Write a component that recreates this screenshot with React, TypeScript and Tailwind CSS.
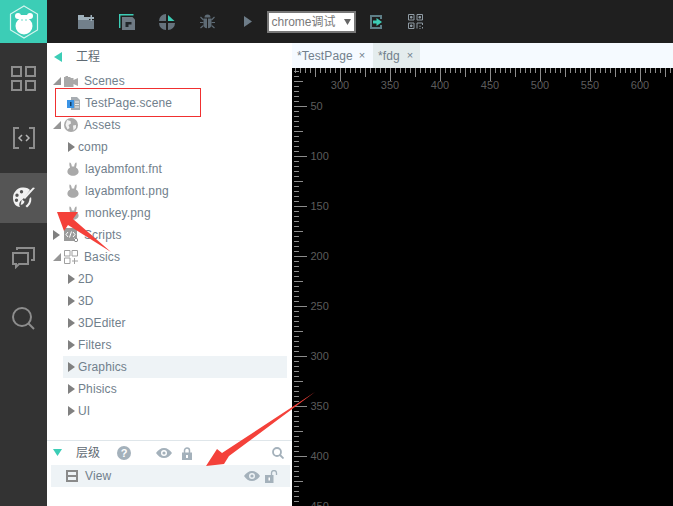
import type { ReactNode } from 'react'

const font = "font-['Liberation_Sans',Arial,'Noto_Sans_CJK_SC',sans-serif]"

const Corner = () => (
  <svg width="8" height="8" viewBox="0 0 8 8" className="shrink-0"><path d="M8 0V8H0Z" fill="#969696" /></svg>
)

const Arrow = () => (
  <svg width="7" height="10" viewBox="0 0 7 10" className="shrink-0"><path d="M0 0L7 5L0 10Z" fill="#808080" /></svg>
)

const Rabbit = () => (
  <svg width="12" height="14" viewBox="0 0 12 14" className="shrink-0">
    <path d="M2.5 0.5C4 0.5 4.6 2.5 4.8 4.5H7.2C7.4 2.5 8 0.5 9.5 0.5C9.8 2 9.6 4 8.9 5.4C10.6 6.3 11.6 7.8 11.6 9.6C11.6 12.2 9.2 13.8 6 13.8C2.8 13.8 0.4 12.2 0.4 9.6C0.4 7.8 1.4 6.3 3.1 5.4C2.4 4 2.2 2 2.5 0.5Z" fill="#a9a9a9" />
  </svg>
)

const Eye = ({ color = '#a4b1bb' }: { color?: string }) => (
  <svg width="16" height="10" viewBox="0 0 16 10" className="shrink-0">
    <path fillRule="evenodd" d="M0 5C2 2 4.800 0 8 0C11.200 0 14 2 16 5C14 8 11.200 10 8 10C4.800 10 2 8 0 5ZM8 2A3 3 0 1 0 8 8A3 3 0 1 0 8 2Z" fill={color} />
    <circle cx="8" cy="5" r="1.600" fill={color} />
  </svg>
)

const Row = ({ className = '', children }: { className?: string; children: ReactNode }) => (
  <div className={`flex h-[22px] items-center text-[12px] tracking-[0.12px] text-[#71808c] ${className}`}>{children}</div>
)

const Folder = ({ name, active }: { name: string; active?: boolean }) => (
  <Row className={`ml-[16px] mr-[5px] pl-[5px] ${active ? 'bg-[#eef3f6]' : ''}`}>
    <Arrow />
    <span className="ml-[3px]">{name}</span>
  </Row>
)

const FileRow = ({ name }: { name: string }) => (
  <Row className="pl-[20px]">
    <Rabbit />
    <span className="ml-[6px]">{name}</span>
  </Row>
)

const Group = ({ name, icon, closed }: { name: string; icon: ReactNode; closed?: boolean }) => (
  <Row className="pl-[6px]">
    {closed ? <Arrow /> : <Corner />}
    <span className={closed ? 'ml-[4px]' : 'ml-[3px]'}>{icon}</span>
    <span className="ml-[6px]">{name}</span>
  </Row>
)

const toolIcon = 'flex w-[40.500px] shrink-0 justify-center'

const Toolbar = () => (
  <div className="flex h-[43px] items-center bg-[#1f1f1f] pl-[19px]">
    <div className={toolIcon}>
      <svg width="16" height="14" viewBox="0 0 16 14">
        <path d="M0 0H6V2H11V5H16V14H0Z" fill="#72808b" />
        <path d="M0 0H6V2H11V5H0Z" fill="#9fb0ba" />
        <path d="M12.500 0V2H10.500V4H12.500V6H14V4H16V2H14V0Z" fill="#9fb0ba" />
      </svg>
    </div>
    <div className={toolIcon}>
      <svg width="16" height="16" viewBox="0 0 16 16">
        <path d="M0.700 14V0.700H14.500" fill="none" stroke="#3ccdb6" strokeWidth="1.400" />
        <path d="M3 3H13.500L16 5.500V16H3Z" fill="#6f7a84" />
        <path d="M6.500 8H12.500V10.500H9.500V13H6.500Z" fill="#22262a" />
      </svg>
    </div>
    <div className={toolIcon}>
      <svg width="16" height="16" viewBox="0 0 16 16">
        <path d="M7 0V7H0A7 7 0 0 1 7 0Z" fill="#66737d" />
        <path d="M9 1L15.500 7H9Z" fill="#3ccdb6" />
        <path d="M0 9H7V16A7 7 0 0 1 0 9Z" fill="#66737d" />
        <path d="M9 9H16A7 7 0 0 1 9 16Z" fill="#66737d" />
      </svg>
    </div>
    <div className={toolIcon}>
      <svg width="15" height="15" viewBox="0 0 15 15">
        <path d="M4.500 3.500A3 3 0 0 1 10.500 3.500Z" fill="#5e6b75" />
        <path d="M3.500 4.500H7V14.300A4 4 0 0 1 3.500 10.500ZM8 4.500H11.500V10.500A4 4 0 0 1 8 14.300Z" fill="#5e6b75" />
        <path d="M0.500 3L3.500 6M14.500 3L11.500 6M0 8.500H3.500M15 8.500H11.500M0.500 14L3.500 11.500M14.500 14L11.500 11.500" stroke="#5e6b75" strokeWidth="1.200" />
      </svg>
    </div>
    <div className={toolIcon}>
      <svg width="8" height="11" viewBox="0 0 8 11"><path d="M0 0L8 5.500L0 11Z" fill="#6d7c88" /></svg>
    </div>
    <div className={`ml-[-2px] flex h-[22px] w-[89px] shrink-0 items-center whitespace-nowrap border-2 border-[#777] bg-white pl-[3px] text-[12px] text-[#7a7a7a] ${font}`}>
      chrome调试
      <svg width="7" height="6" viewBox="0 0 7 6" className="ml-[8px] shrink-0"><path d="M0 0H7L3.500 6Z" fill="#666" /></svg>
    </div>
    <div className="ml-[10px] flex w-[20px] justify-center">
      <svg width="12" height="14" viewBox="0 0 12 14">
        <path d="M0 0H12V4H10V2H2V12H10V10H12V14H0Z" fill="#5f7f88" />
        <path d="M3 5.500H6.500V3L12 7L6.500 11V8.500H3Z" fill="#3ccdb6" />
      </svg>
    </div>
    <div className="ml-[20px] flex w-[20px] justify-center">
      <svg width="15" height="15" viewBox="0 0 15 15" fill="none" stroke="#8e9aa3" strokeWidth="1">
        <path d="M0.500 0.500H6V6H0.500ZM9 0.500H14.500V6H9ZM0.500 9H6V14.500H0.500Z" />
        <path d="M2.500 2.500H4V4H2.500ZM11 2.500H12.500V4H11ZM2.500 11H4V12.500H2.500Z" fill="#8e9aa3" />
        <path d="M9 14.500V9H14.500V11M12 11.500V13M14.500 13V14.500M11.500 14.500H12.500" />
      </svg>
    </div>
  </div>
)

const navItem = 'flex h-[50px] w-full items-center justify-center'

const Sidebar = () => (
  <div className="flex w-[47px] shrink-0 flex-col gap-[10px] bg-[#333] pt-[10px]">
    <div className={navItem}>
      <svg width="25" height="25" viewBox="0 0 25 25" fill="none" stroke="#8d8d8d" strokeWidth="2">
        <path d="M1 1H10V10H1ZM15 1H24V10H15ZM1 15H10V24H1ZM15 15H24V24H15Z" />
      </svg>
    </div>
    <div className={navItem}>
      <svg width="22" height="22" viewBox="0 0 22 22" fill="none" stroke="#8d8d8d" strokeWidth="2">
        <path d="M6 1H1V21H6M16 1H21V21H16" />
        <path d="M9 8L6 11L9 14M13 8L16 11L13 14" stroke="#b5b5b5" strokeWidth="1.500" />
      </svg>
    </div>
    <div className={`${navItem} bg-[#555]`}>
      <svg width="24" height="24" viewBox="0 0 24 24">
        <path fillRule="evenodd" d="M10 1.500C14 1 17 2.500 18 4L11 13L8.500 15C7 17 6.800 19 8 21C4 21 1 17 1 12C1 6.500 5 2 10 1.500ZM9.500 4A1.700 1.700 0 1 0 9.500 7.400A1.700 1.700 0 1 0 9.500 4ZM5 7.500A1.700 1.700 0 1 0 5 10.900A1.700 1.700 0 1 0 5 7.500ZM4.500 12.500A1.700 1.700 0 1 0 4.500 15.900A1.700 1.700 0 1 0 4.500 12.500Z" fill="#f2f2f2" />
        <path d="M23 2L13 13L11 11.500L21 1.500Z" fill="#f2f2f2" />
        <path d="M10 13.500L12.500 15.500C12 18 10 19 8.500 18.500C9.500 17 9 15 10 13.500Z" fill="#f2f2f2" />
        <path d="M19 11C20 15 18.500 19 15 21.500L13.500 20C16 18.500 17.500 15 17.500 12.500Z" fill="#f2f2f2" />
      </svg>
    </div>
    <div className={navItem}>
      <svg width="23" height="22" viewBox="0 0 23 22" fill="none" stroke="#8d8d8d" strokeWidth="2">
        <path d="M1 6H16V17H7L4 20V17H1Z" />
        <path d="M5 3V1H22V13H19" />
      </svg>
    </div>
    <div className={navItem}>
      <svg width="23" height="23" viewBox="0 0 23 23" fill="none" stroke="#8d8d8d" strokeWidth="2">
        <circle cx="10" cy="10" r="9" />
        <path d="M16.500 16.500L22 22" />
      </svg>
    </div>
  </div>
)

const ProjectTree = () => (
  <div className="flex-1">
    <div className="flex h-[27px] items-center pl-[7px]">
      <svg width="8" height="10" viewBox="0 0 8 10"><path d="M8 0V10L0 5Z" fill="#3ccdb6" /></svg>
      <span className="ml-[14px] text-[12px] text-[#5f6a73]">工程</span>
    </div>
    <Group name="Scenes" icon={
      <svg width="14" height="11" viewBox="0 0 14 11" className="block">
        <path d="M0 1H1.500V0H4V1H6.500V2H9.500V4L14 2V10L9.500 8V11H0Z" fill="#a9a9a9" />
      </svg>
    } />
    <Row className="pl-[20px]">
      <svg width="13" height="14" viewBox="0 0 13 14" className="shrink-0">
        <path d="M4 1H10L13 4V14H4Z" fill="#a8adb2" />
        <path d="M8 6H12M8 8.500H12M8 11H12" stroke="#f0f0f0" strokeWidth="1" />
        <path d="M0 4H7V12H0Z" fill="#3b94e6" />
        <path d="M3 6H4.500V10H3Z" fill="#123e66" />
      </svg>
      <span className="ml-[5px]">TestPage.scene</span>
    </Row>
    <Group name="Assets" icon={
      <svg width="14" height="14" viewBox="0 0 14 14" className="block">
        <circle cx="7" cy="7" r="7" fill="#a9a9a9" />
        <path d="M3 2L6.500 3L7 5.500L4.500 7L5.500 10L3.500 11.500L1.500 7ZM9 7.500L12 7L12 10L9.500 12.500Z" fill="#f2f2f2" />
      </svg>
    } />
    <Folder name="comp" />
    <FileRow name="layabmfont.fnt" />
    <FileRow name="layabmfont.png" />
    <FileRow name="monkey.png" />
    <Group name="Scripts" closed icon={
      <svg width="14" height="14" viewBox="0 0 14 14" className="block">
        <path d="M0 0H13V10H10V13H0Z" fill="#9a9a9a" />
        <path d="M4 4L2 6.500L4 9M9 4L11 6.500L9 9M7.500 3.500L5.500 9.500" fill="none" stroke="#fff" strokeWidth="1" />
        <circle cx="12" cy="12" r="1.700" fill="none" stroke="#8a8a8a" strokeWidth="1" />
      </svg>
    } />
    <Group name="Basics" icon={
      <svg width="14" height="14" viewBox="0 0 14 14" fill="none" stroke="#a0a0a0" strokeWidth="1" className="block">
        <path d="M0.500 0.500H6V6H0.500ZM8 0.500H13.500V6H8ZM0.500 8H6V13.500H0.500ZM10.500 8V14M8 11H14" />
      </svg>
    } />
    <Folder name="2D" />
    <Folder name="3D" />
    <Folder name="3DEditer" />
    <Folder name="Filters" />
    <Folder name="Graphics" active />
    <Folder name="Phisics" />
    <Folder name="UI" />
  </div>
)

const Layers = () => (
  <div className="h-[66px] border-t border-[#dfe6ea]">
    <div className="flex h-[24px] items-center pl-[6px] pr-[8px]">
      <svg width="9" height="7" viewBox="0 0 9 7" className="mb-[2px]"><path d="M0 0H9L4.500 7Z" fill="#3ccdb6" /></svg>
      <span className="ml-[14px] text-[12px] text-[#5f6a73]">层级</span>
      <span className={`ml-[17px] flex h-[14px] w-[14px] items-center justify-center rounded-full bg-[#a4b1bb] text-[11px] font-bold text-white ${font}`}>?</span>
      <span className="ml-[25px]"><Eye /></span>
      <svg width="10" height="13" viewBox="0 0 10 13" className="ml-[10px]">
        <path d="M2.500 6V3.500A2.500 2.500 0 0 1 7.500 3.500V6" fill="none" stroke="#a4b1bb" strokeWidth="1.500" />
        <path d="M0 5.500H10V13H0Z" fill="#a4b1bb" />
        <path d="M4 8H6V11H4Z" fill="#fff" />
      </svg>
      <svg width="12" height="12" viewBox="0 0 12 12" className="ml-auto" fill="none" stroke="#a4b1bb" strokeWidth="1.800">
        <circle cx="5" cy="5" r="4" />
        <path d="M8 8L11.500 11.500" />
      </svg>
    </div>
    <Row className="ml-[4px] mr-[2px] bg-[#eef3f6] pl-[15px] pr-[11px]">
      <svg width="12" height="12" viewBox="0 0 12 12" fill="none" stroke="#8a8a8a" strokeWidth="2" className="shrink-0">
        <path d="M1 1H11V11H1ZM1 6H11" />
      </svg>
      <span className="ml-[7px]">View</span>
      <span className="ml-auto"><Eye /></span>
      <svg width="14" height="13" viewBox="0 0 14 13" className="ml-[5px] shrink-0">
        <path d="M0 5H8.500V13H0Z" fill="#a4b1bb" />
        <path d="M6.500 5V3A2.500 2.500 0 0 1 11.500 3V5" fill="none" stroke="#a4b1bb" strokeWidth="1.300" />
        <path d="M3.500 7.500H5V10.500H3.500Z" fill="#fff" />
      </svg>
    </Row>
  </div>
)

// ruler origin inside the 381x438 canvas: x = value - 252, y = value - 12
const hTicks = Array.from({ length: 76 }, (_, i) => i * 5 + 3)
const vTicks = Array.from({ length: 88 }, (_, i) => i * 5 + 3)

const Ruler = () => (
  <svg width="381" height="438" viewBox="0 0 381 438" className="block" fontFamily="Liberation Sans, Arial, sans-serif" fontSize="11">
    {hTicks.map(x => {
      const v = x + 252
      const h = v % 50 === 0 ? 13 : v % 25 === 0 ? 9 : 5
      return <rect key={x} x={x} y={0} width={1} height={h} fill="#8c8c8c" />
    })}
    {vTicks.map(y => {
      const v = y + 12
      const w = v % 50 === 0 ? 13 : v % 25 === 0 ? 9 : 5
      return <rect key={y} x={2} y={y} width={w} height={1} fill="#8c8c8c" />
    })}
    {[300, 350, 400, 450, 500, 550, 600].map(v => (
      <text key={v} x={v - 252} y={21} textAnchor="middle" fill="#5c5c5c">{v}</text>
    ))}
    {[50, 100, 150, 200, 250, 300, 350, 400, 450].map(v => (
      <text key={v} x={18.500} y={v - 12 + 4} fill="#5c5c5c">{v}</text>
    ))}
  </svg>
)

const Annotations = () => (
  <>
    <div className="absolute left-[55px] top-[88px] h-[29px] w-[146px] border border-[#f03030]" />
    <svg width="673" height="506" viewBox="0 0 673 506" className="pointer-events-none absolute left-0 top-0">
      <path d="M57 212L78 212L73 219L111 252L68 225L64 231Z" fill="#f4413a" />
      <path d="M206 466L217 449L222 453L315 392L229 456L224 464Z" fill="#f4413a" />
    </svg>
  </>
)

export default function App() {
  return (
    <div className={`relative h-[506px] w-[673px] overflow-hidden bg-white ${font}`}>
      <div className="flex h-[43px]">
        <div className="flex w-[47px] shrink-0 items-center justify-center bg-[#3ccdb6]">
          <svg width="30" height="34" viewBox="0 0 30 34">
            <path d="M15 1L28.500 9V25L15 33L1.500 25V9Z" fill="none" stroke="#d5f5ef" strokeWidth="1.200" />
            <circle cx="9" cy="11" r="3" fill="#fff" />
            <circle cx="21" cy="11" r="3" fill="#fff" />
            <path d="M9 10H21V14H9Z" fill="#fff" />
            <circle cx="15" cy="21" r="8.500" fill="#fff" />
            <circle cx="15" cy="15" r="4.500" fill="#fff" />
            <circle cx="13" cy="15" r="0.700" fill="#3ccdb6" />
            <circle cx="17" cy="15" r="0.700" fill="#3ccdb6" />
          </svg>
        </div>
        <div className="min-w-0 flex-1"><Toolbar /></div>
      </div>
      <div className="flex h-[463px]">
        <Sidebar />
        <div className="flex w-[245px] shrink-0 flex-col">
          <ProjectTree />
          <Layers />
        </div>
        <div className="flex min-w-0 flex-1 flex-col">
          <div className="flex h-[25px] items-center bg-[#f5faff] text-[12px] tracking-[0.12px] text-[#71808c]">
            <div className="flex h-full w-[81px] items-center pl-[5px]">*TestPage<span className="ml-[6px] text-[11px]">×</span></div>
            <div className="flex h-full w-[47px] items-center bg-[#e4eced] pl-[5px]">*fdg<span className="ml-[7px] text-[11px]">×</span></div>
          </div>
          <div className="flex-1 overflow-hidden bg-black"><Ruler /></div>
        </div>
      </div>
      <Annotations />
    </div>
  )
}
